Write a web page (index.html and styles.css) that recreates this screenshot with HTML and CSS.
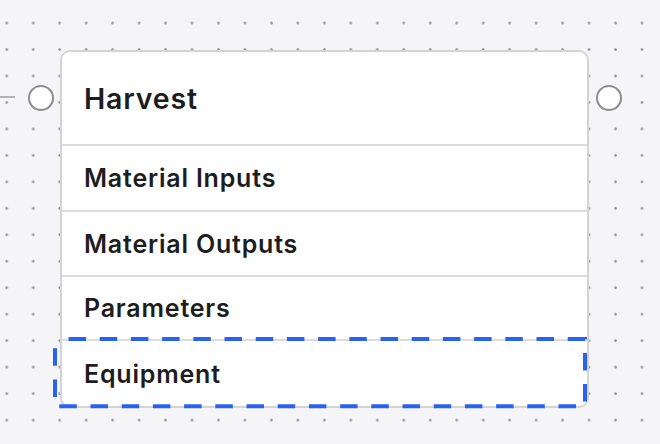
FILE: index.html
```html
<!DOCTYPE html>
<html>
<head>
<meta charset="utf-8">
<link rel="stylesheet" href="styles.css">
</head>
<body>
<div class="canvas">
  <div class="wire"></div>
  <div class="node">
    <span class="handle handle-left"></span>
    <span class="handle handle-right"></span>
    <div class="node-header">Harvest</div>
    <div class="section s1">Material Inputs</div>
    <div class="section s2">Material Outputs</div>
    <div class="section s3">Parameters</div>
    <div class="section s4">Equipment</div>
    <svg class="drop-target" width="538" height="75" viewBox="0 0 538 75">
      <rect x="2" y="2" width="530" height="67.3" fill="none" stroke="#2962f2" stroke-width="4" stroke-dasharray="17.5 13.7" stroke-dashoffset="-13.5"/>
    </svg>
  </div>
</div>
</body>
</html>
```
FILE: styles.css
```css
html, body {
  margin: 0;
  padding: 0;
}
body {
  width: 660px;
  height: 444px;
  overflow: hidden;
  background-color: #f5f5f7;
  background-image: radial-gradient(circle at center, #9c9ca0 0, #9c9ca0 1px, rgba(156,156,160,0) 1.6px);
  background-size: 26.48px 26.48px;
  background-position: -6.5px 9.8px;
  font-family: Inter, "Open Sans", sans-serif;
  color: #1d1d20;
}
.canvas {
  position: relative;
  padding: 50px 0 0 60px;
}
.wire {
  position: absolute;
  left: 0;
  top: 96px;
  width: 15px;
  height: 2px;
  background: #b4b4b6;
}
.node {
  position: relative;
  width: 529px;
  box-sizing: border-box;
  border: 2px solid #d4d4d6;
  border-radius: 10px;
  background: #fff;
}
.node-header {
  height: 92px;
  display: flex;
  align-items: center;
  padding-left: 22px;
  font-size: 28.5px;
  font-weight: 600;
  letter-spacing: 0.8px;
  border-bottom: 2px solid #dcdcde;
}
.section {
  display: flex;
  align-items: center;
  padding-left: 22px;
  font-size: 25px;
  font-weight: 600;
  letter-spacing: 0.8px;
  border-bottom: 2px solid #dcdcde;
}
.s1 { height: 64px; }
.s2 { height: 63px; }
.s3 { height: 62px; }
.s4 { height: 65px; border-bottom: none; border-radius: 0 0 8px 8px; }
.handle {
  position: absolute;
  top: 33px;
  width: 22px;
  height: 22px;
  border: 2.5px solid #8d8d90;
  border-radius: 50%;
  background: #fff;
}
.handle-left { left: -34px; }
.handle-right { right: -35px; }
.drop-target {
  position: absolute;
  left: -9px;
  top: 285px;
  overflow: visible;
}
```
